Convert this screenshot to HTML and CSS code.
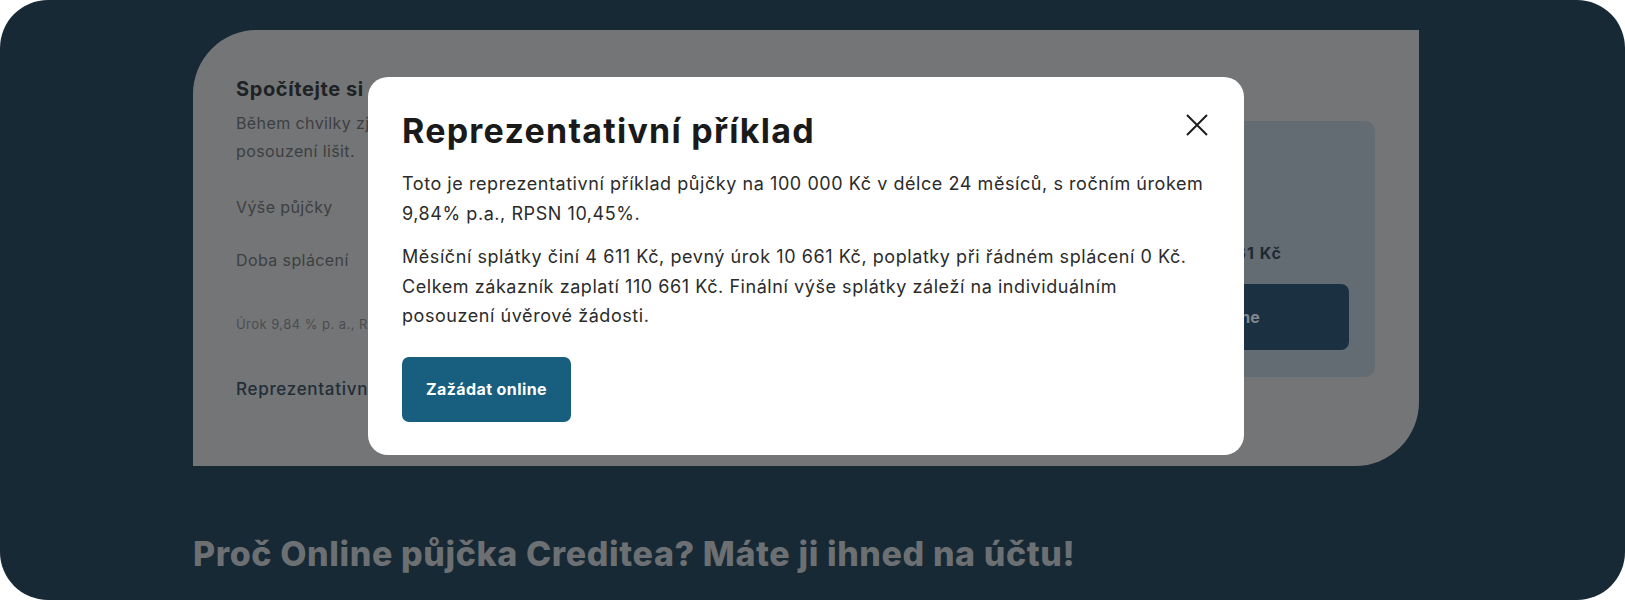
FILE: index.html
```html
<!DOCTYPE html>
<html lang="cs">
<head>
<meta charset="utf-8">
<title>Reprezentativní příklad</title>
<link rel="stylesheet" href="styles.css">
</head>
<body>
<div class="frame">
  <section class="card">
    <div class="calc">
      <h2 class="calc-title">Spočítejte si online půjčku</h2>
      <p class="calc-desc">Během chvilky zjistíte, kolik budete měsíčně splácet. Finální výše splátky se může dle individuálního<br>posouzení lišit.</p>
      <div class="calc-row">Výše půjčky</div>
      <div class="calc-row">Doba splácení</div>
      <p class="calc-note">Úrok 9,84 % p. a., RPSN 10,45 %</p>
      <a class="calc-link">Reprezentativní příklad</a>
    </div>
    <aside class="summary">
      <div class="summary-label">Měsíční splátka</div>
      <div class="summary-label">4 611 Kč</div>
      <div class="summary-total">Celkem 110 661 Kč</div>
      <div class="summary-btn">Zažádat online</div>
    </aside>
  </section>
  <h2 class="why">Proč Online půjčka Creditea? Máte ji ihned na účtu!</h2>

  <div class="modal">
    <button class="modal-close" aria-label="Zavřít">
      <svg width="22" height="22" viewBox="0 0 22 22"><path d="M1 1 L21 21 M21 1 L1 21" stroke="#1c1c1c" stroke-width="2" fill="none"/></svg>
    </button>
    <h1 class="modal-title">Reprezentativní příklad</h1>
    <p class="modal-text">Toto je reprezentativní příklad půjčky na 100 000 Kč v délce 24 měsíců, s ročním úrokem 9,84% p.a., RPSN 10,45%.</p>
    <p class="modal-text">Měsíční splátky činí 4 611 Kč, pevný úrok 10 661 Kč, poplatky při řádném splácení 0 Kč. Celkem zákazník zaplatí 110 661 Kč. Finální výše splátky záleží na individuálním posouzení&nbsp;úvěrové žádosti.</p>
    <button class="modal-btn">Zažádat online</button>
  </div>
</div>
</body>
</html>
```

FILE: styles.css
```css
* { box-sizing: border-box; }
html, body { margin: 0; padding: 0; background: #ffffff; }
body { font-family: "Inter", "Liberation Sans", sans-serif; }

.frame {
  position: relative;
  width: 1625px;
  height: 600px;
  background: #172935;
  border-radius: 48px;
  overflow: hidden;
  padding: 30px 0 0 193px;
}

.card {
  width: 1226px;
  height: 436px;
  background: #747576;
  border-radius: 64px 0 64px 0;
  padding: 45px 44px 0 43px;
  display: flex;
  align-items: flex-start;
}

.calc { flex: 1; color: #3c3f42; letter-spacing: 0.4px; }
.calc-title {
  margin: 0;
  font-size: 20px;
  line-height: 28px;
  font-weight: 700;
  color: #1e2225;
  letter-spacing: 0.6px;
}
.calc-desc {
  margin: 6px 0 0;
  font-size: 16px;
  line-height: 28px;
  white-space: nowrap;
}
.calc-row {
  font-size: 16px;
  line-height: 28px;
  height: 53px;
}
.calc-desc + .calc-row { margin-top: 28px; }
.calc-note {
  margin: 15px 0 0;
  font-size: 13px;
  line-height: 20px;
  color: #4a4d50;
  letter-spacing: 0.45px;
}
.calc-link {
  display: block;
  margin-top: 43px;
  font-size: 17px;
  line-height: 24px;
  font-weight: 500;
  color: #1f2e38;
  letter-spacing: 0.7px;
}

.summary {
  width: 348px;
  margin-top: 46px;
  height: 256px;
  background: #636c73;
  border-radius: 10px;
  padding: 26px 26px 27px;
  display: flex;
  flex-direction: column;
}
.summary-label { font-size: 16px; line-height: 24px; color: #2a3238; }
.summary-total {
  margin-top: 44px;
  font-size: 16px;
  line-height: 28px;
  font-weight: 700;
  text-align: center;
  color: #1e2a33;
  letter-spacing: 1px;
}
.summary-btn {
  margin-top: 17px;
  height: 66px;
  border-radius: 8px;
  background: #1b3141;
  color: #80868a;
  font-size: 16px;
  font-weight: 700;
  display: flex;
  align-items: center;
  justify-content: center;
}

.why {
  margin: 66px 0 0;
  font-size: 34px;
  line-height: 44px;
  font-weight: 800;
  color: #6c7073;
  letter-spacing: 0.6px;
}

.modal {
  position: absolute;
  left: 368px;
  top: 77px;
  width: 876px;
  background: #ffffff;
  border-radius: 20px;
  padding: 32px 34px 33px;
}
.modal-close {
  position: absolute;
  right: 36px;
  top: 37px;
  width: 22px;
  height: 22px;
  padding: 0;
  border: 0;
  background: none;
  display: block;
}
.modal-close svg { display: block; }
.modal-title {
  margin: 0;
  font-size: 34px;
  line-height: 44px;
  font-weight: 700;
  color: #1a1a1a;
  letter-spacing: 1.25px;
}
.modal-text {
  margin: 16px 0 0;
  font-size: 18px;
  line-height: 29.5px;
  color: #2b2b2b;
  letter-spacing: 0.56px;
}
.modal-text + .modal-text { margin-top: 14px; }
.modal-btn {
  display: block;
  margin-top: 26px;
  height: 65px;
  padding: 0 24px;
  border: 0;
  border-radius: 7px;
  background: #175e7f;
  color: #ffffff;
  font-family: inherit;
  font-size: 16px;
  font-weight: 700;
  letter-spacing: 0.4px;
}
```
